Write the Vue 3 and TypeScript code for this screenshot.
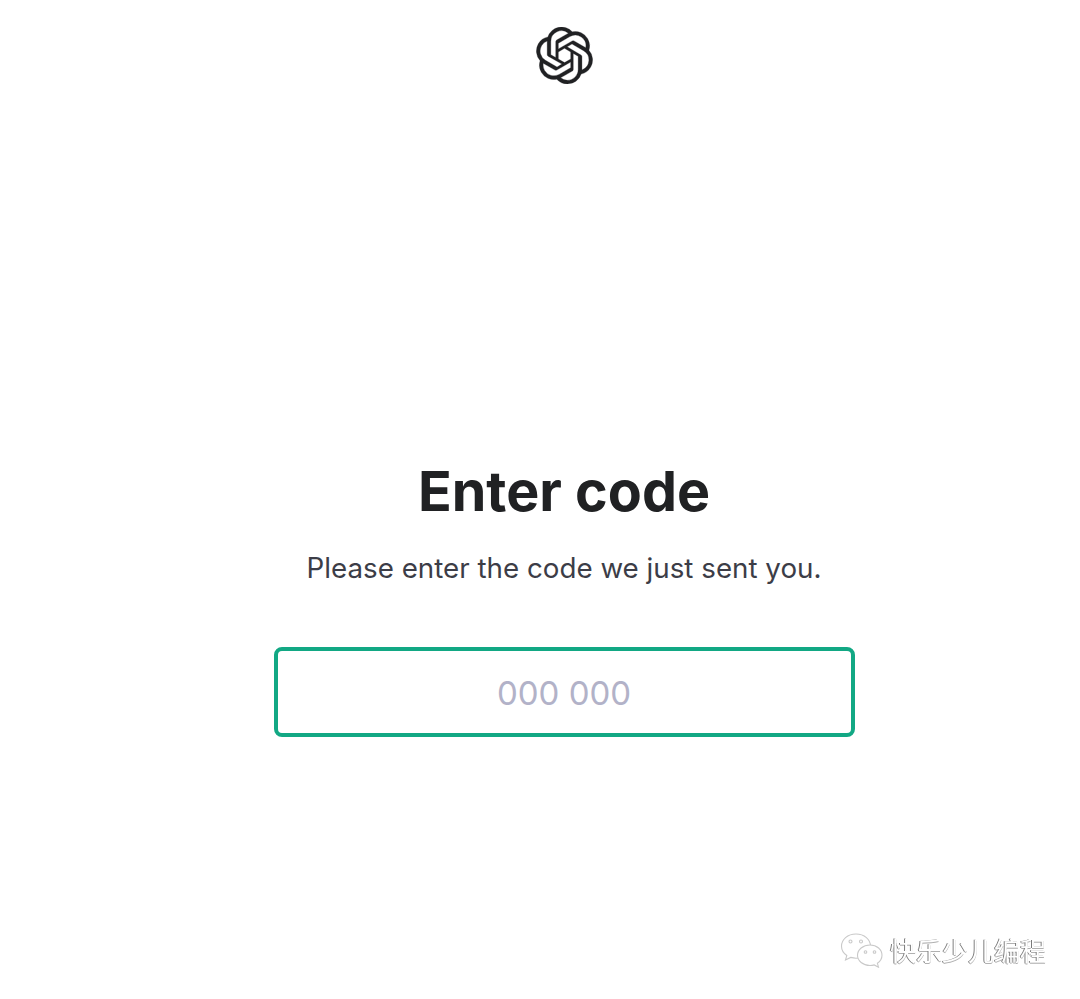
<script setup lang="ts">
const logo = "M22.2819 9.8211a5.9847 5.9847 0 0 0-.5157-4.9108 6.0462 6.0462 0 0 0-6.5098-2.9A6.0651 6.0651 0 0 0 4.9807 4.1818a5.9847 5.9847 0 0 0-3.9977 2.9 6.0462 6.0462 0 0 0 .7427 7.0966 5.98 5.98 0 0 0 .511 4.9107 6.051 6.051 0 0 0 6.5146 2.9001A5.9847 5.9847 0 0 0 13.2599 24a6.0557 6.0557 0 0 0 5.7718-4.2058 5.9894 5.9894 0 0 0 3.9977-2.9001 6.0557 6.0557 0 0 0-.7475-7.0729zm-9.022 12.6081a4.4755 4.4755 0 0 1-2.8764-1.0408l.1419-.0804 4.7783-2.7582a.7948.7948 0 0 0 .3927-.6813v-6.7369l2.02 1.1686a.071.071 0 0 1 .038.052v5.5826a4.504 4.504 0 0 1-4.4945 4.4944zm-9.6607-4.1254a4.4708 4.4708 0 0 1-.5346-3.0137l.142.0852 4.783 2.7582a.7712.7712 0 0 0 .7806 0l5.8428-3.3685v2.3324a.0804.0804 0 0 1-.0332.0615L9.74 19.9502a4.4992 4.4992 0 0 1-6.1408-1.6464zM2.3408 7.8956a4.485 4.485 0 0 1 2.3655-1.9728V11.6a.7664.7664 0 0 0 .3879.6765l5.8144 3.3543-2.0201 1.1685a.0757.0757 0 0 1-.071 0l-4.8303-2.7865A4.504 4.504 0 0 1 2.3408 7.872zm16.5963 3.8558L13.1038 8.364 15.1192 7.2a.0757.0757 0 0 1 .071 0l4.8303 2.7913a4.4944 4.4944 0 0 1-.6765 8.1042v-5.6772a.79.79 0 0 0-.407-.667zm2.0107-3.0231l-.142-.0852-4.7735-2.7818a.7759.7759 0 0 0-.7854 0L9.409 9.2297V6.8974a.0662.0662 0 0 1 .0284-.0615l4.8303-2.7866a4.4992 4.4992 0 0 1 6.6802 4.66zM8.3065 12.863l-2.02-1.1638a.0804.0804 0 0 1-.038-.0567V6.0742a4.4992 4.4992 0 0 1 7.3757-3.4537l-.142.0805L8.704 5.459a.7948.7948 0 0 0-.3927.6813zm1.0976-2.3654l2.602-1.4998 2.6069 1.4998v2.9994l-2.5974 1.4997-2.6067-1.4997Z";
</script>

<template>
  <div class="page">
    <svg class="logo" viewBox="0 0 24 24" aria-label="OpenAI"><path :d="logo" fill="#202123" stroke="#202123" stroke-width="0.12" /></svg>
    <h1 class="title">Enter code</h1>
    <p class="sub">Please enter the code we just sent you.</p>
    <div class="field">000 000</div>
    <div class="mark">
      <svg class="wechat" viewBox="0 0 44 36" fill="none" stroke="#c9c9c9" stroke-width="1.1">
        <path fill="#fff" d="M16 2C7.5 2 1.5 7.6 1.5 14.2c0 3.8 2 7 5.3 9.3L5.5 28l5.2-2.6c1.7.5 3.4.8 5.3.8 8.4 0 14.500-5.400 14.500-12S24.400 2 16 2Z" />
        <path fill="#fff" d="M30 13c-7 0-12.500 4.600-12.500 10.300S23 33.500 30 33.500c1.500 0 2.900-.2 4.200-.6l4.300 2.300-1.100-3.900c2.800-1.900 4.600-4.800 4.600-8C42 17.600 37 13 30 13Z" />
        <circle cx="10.500" cy="9.500" r="1.500" /><circle cx="21" cy="9.500" r="1.500" />
        <circle cx="25.500" cy="20" r="1.300" /><circle cx="34.500" cy="20" r="1.300" />
      </svg>
      <span class="mark-text">快乐少儿编程</span>
    </div>
  </div>
</template>

<style>
html, body { margin: 0; background: #fff; overflow: hidden; }
</style>

<style scoped>
.page {
  position: relative;
  box-sizing: border-box;
  width: 1080px;
  height: 999px;
  padding: 27px 0 0 48px;
  display: flex;
  flex-direction: column;
  align-items: center;
  font-family: Inter, "Liberation Sans", sans-serif;
  overflow: hidden;
}
.logo { width: 57px; height: 57px; display: block; }
.title {
  margin: 375px 0 0;
  font-size: 55.6px;
  line-height: 64px;
  font-weight: 700;
  color: #202123;
}
.sub {
  margin: 26px 0 0;
  font-size: 27.75px;
  line-height: 38px;
  font-weight: 400;
  color: #3c3d47;
}
.field {
  box-sizing: border-box;
  margin-top: 60px;
  width: 581px;
  height: 90px;
  padding-top: 2px;
  border: 4px solid #12a884;
  border-radius: 8px;
  display: flex;
  align-items: center;
  justify-content: center;
  font-size: 33px;
  color: #b2b2c8;
}
.mark {
  position: absolute;
  left: 840px;
  top: 932px;
  display: flex;
  align-items: center;
  gap: 6px;
  filter: grayscale(1);
}
.wechat { width: 44px; height: 36px; display: block; }
.mark-text {
  font-family: "Noto Sans CJK SC", sans-serif;
  font-size: 26px;
  line-height: 36px;
  color: #fff;
  text-shadow: -1px 0 0 #7a7a7a, 0 1px 0 #b0b0b0;
}
</style>
